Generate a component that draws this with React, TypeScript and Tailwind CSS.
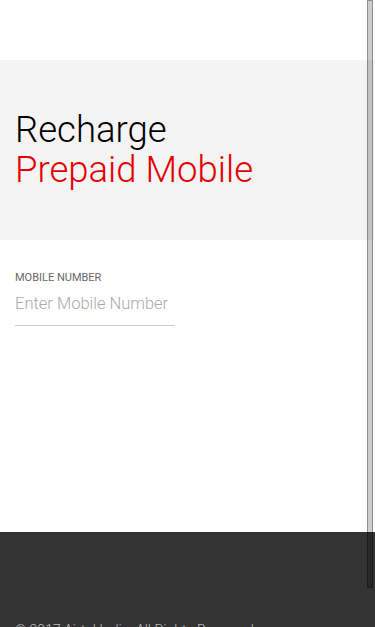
import React from 'react'

const App = () => {
  return (
    <div className="relative min-h-[668px] flex flex-col bg-white font-['Roboto',sans-serif]">
      <header className="h-[60px] bg-white" />
      <section className="h-[180px] bg-[#f4f4f4] flex flex-col justify-center px-[15px]">
        <h1 className="text-[36.5px] leading-[40px] font-light text-black">Recharge</h1>
        <h2 className="text-[36.5px] leading-[40px] font-light text-[#e40000]">Prepaid Mobile</h2>
      </section>
      <main className="h-[292px] px-[15px] pt-[31px]">
        <label className="block text-[11px] leading-[14px] text-[#666] uppercase">Mobile Number</label>
        <input
          className="mt-[7px] w-[160px] border-b border-[#ccc] pb-[8px] text-[16.5px] font-light text-[#333] placeholder:text-[#aaa] outline-none bg-transparent"
          placeholder="Enter Mobile Number"
        />
      </main>
      <footer className="flex-1 bg-[#333] px-[15px] pt-[90px] pb-[30px]">
        <p className="text-[14px] leading-[16px] font-light text-[#bbb]">© 2017 Airtel India. All Rights Reserved.</p>
      </footer>
      {/* overlay scrollbar thumb */}
      <div className="fixed top-0 right-[2px] w-[6px] h-[588px] bg-black/20 border border-black/30" />
    </div>
  )
}

export default App
